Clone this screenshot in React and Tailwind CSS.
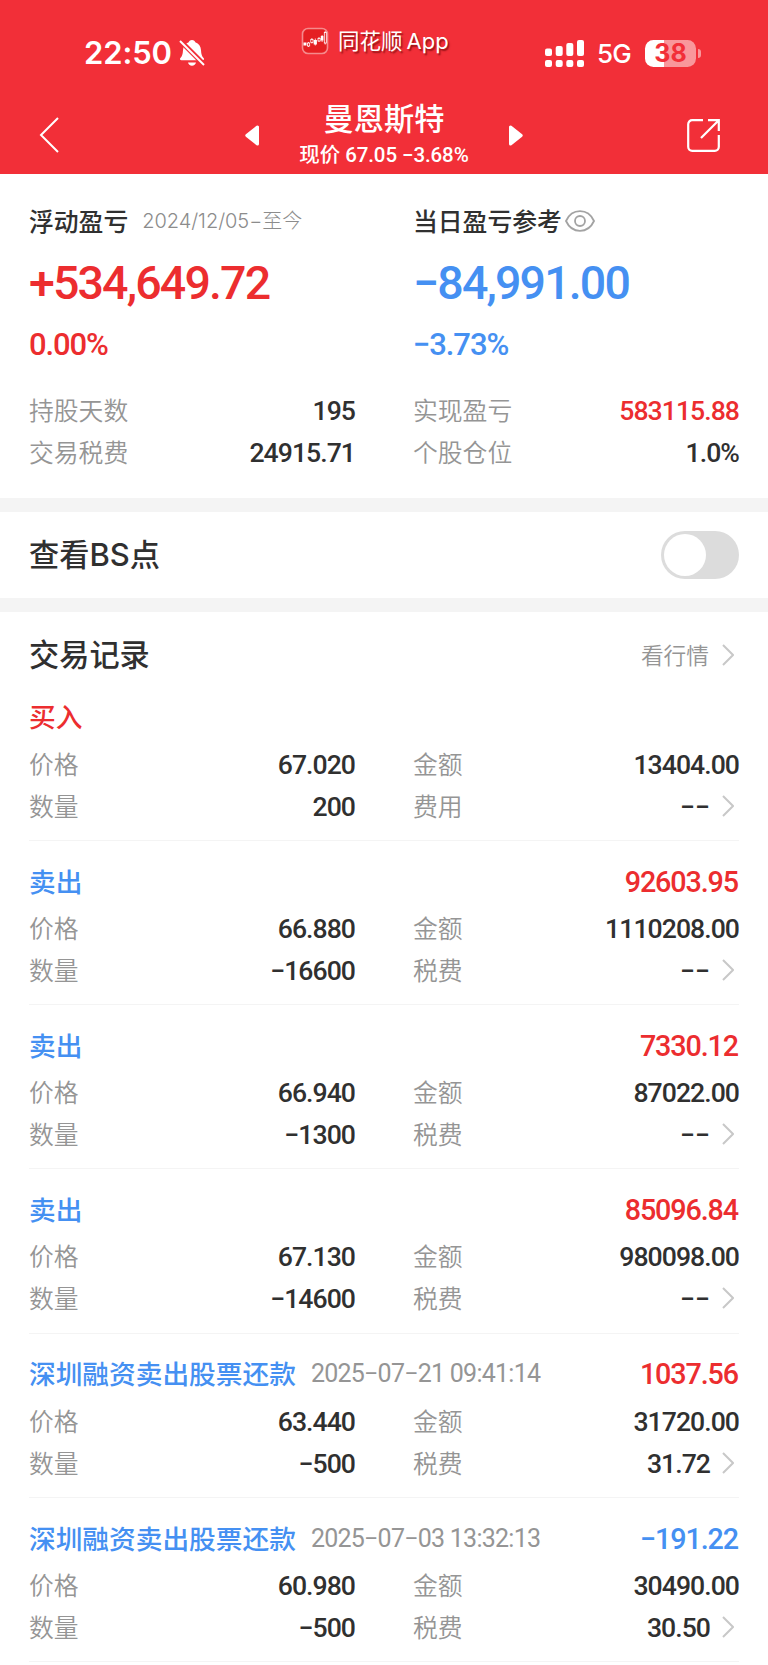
import React from 'react';

const RED = 'text-[#ec2d2f]';
const BLUE = 'text-[#4590f2]';
const NUM = "font-['Roboto','Noto_Sans_CJK_SC',sans-serif]";
const UI = "font-['Inter','Noto_Sans_CJK_SC',sans-serif]";

const records = [
  { side: '买入', color: RED, price: '67.020', amount: '13404.00', qty: '200', feeLabel: '费用', fee: '−−' },
  { side: '卖出', color: BLUE, profit: '92603.95', profitColor: RED, price: '66.880', amount: '1110208.00', qty: '−16600', feeLabel: '税费', fee: '−−' },
  { side: '卖出', color: BLUE, profit: '7330.12', profitColor: RED, price: '66.940', amount: '87022.00', qty: '−1300', feeLabel: '税费', fee: '−−' },
  { side: '卖出', color: BLUE, profit: '85096.84', profitColor: RED, price: '67.130', amount: '980098.00', qty: '−14600', feeLabel: '税费', fee: '−−' },
  { side: '深圳融资卖出股票还款', color: BLUE, time: '2025−07−21 09:41:14', profit: '1037.56', profitColor: RED, price: '63.440', amount: '31720.00', qty: '−500', feeLabel: '税费', fee: '31.72' },
  { side: '深圳融资卖出股票还款', color: BLUE, time: '2025−07−03 13:32:13', profit: '−191.22', profitColor: BLUE, price: '60.980', amount: '30490.00', qty: '−500', feeLabel: '税费', fee: '30.50' },
];

function Chevron() {
  return (
    <svg className="mr-[5px] h-6 w-3 shrink-0" viewBox="0 0 12 24" fill="none" stroke="#c8c8c8" strokeWidth="2">
      <path d="M1 2 L11 12 L1 22" />
    </svg>
  );
}

function Pair({ label, value, color = 'text-[#303030]', arrow = false }) {
  const tracking = value === '−−' ? 'tracking-[0px]' : 'tracking-[-0.95px]';
  return (
    <div className="flex h-[42px] items-center justify-between">
      <span className="pb-[2px] text-[24.8px] leading-[40px] font-[350] text-[#959595]">{label}</span>
      <span className="flex items-center">
        <span className={`${NUM} ${color} ${tracking} pt-[2px] text-[26.6px] leading-[40px] font-medium`}>{value}</span>
        {arrow && <span className="ml-[12px] flex"><Chevron /></span>}
      </span>
    </div>
  );
}

function StatusBar() {
  return (
    <div className={`${UI} flex h-[100px] items-start text-white`}>
      <div className="flex w-[301px] items-center pt-[34px] pl-[84px]">
        <span className="w-[88px] text-[31px] leading-[38px] font-semibold tracking-[-0.1px]">22:50</span>
        <svg className="ml-[7px] h-[28px] w-[26px]" viewBox="0 0 26 28">
          <path fill="#fff" d="M13 1c1.900 0 3 1.100 3.300 2.300 3.600 1.200 5.500 4.200 5.700 8 .2 4.200 1 6.200 2.600 7.700.9 1 .3 2.300-1 2.300H2.400c-1.300 0-1.900-1.300-1-2.300C3 17.500 3.800 15.500 4 11.300c.2-3.800 2.100-6.800 5.700-8C10 2.100 11.100 1 13 1zM9 23.500h8c-.4 2-2 3.200-4 3.200s-3.600-1.200-4-3.200z" />
          <path stroke="#f22f38" strokeWidth="5" d="M0 .5 26 26.500" />
          <path stroke="#fff" strokeWidth="1.900" d="M1 2 25 26" />
        </svg>
      </div>
      <div className="flex w-[244px] items-center pt-[26px]">
        <svg className="h-[28px] w-[28px]" viewBox="0 0 28 28">
          <rect x="1.500" y="1.500" width="25" height="25" rx="5.500" fill="#e51f22" stroke="#f58a8c" strokeWidth="1.600" />
          <g fill="#fff">
            <rect x="2.500" y="15.500" width="3" height="3" />
            <rect x="12.700" y="13" width="3.200" height="4.500" />
            <rect x="19.800" y="9" width="2.600" height="4.500" />
          </g>
          <g fill="none" stroke="#fff" strokeWidth=".8">
            <path d="M7.500 15v1M7.500 19v1M10.900 11v1.500M10.900 15.500v1M14.300 11.500v7M18 10v1.500M18 14v1M21.100 8v7M24.200 4v1.500M24.200 16v1.500" />
            <rect x="6.500" y="16" width="2.200" height="3" />
            <rect x="9.800" y="12.500" width="2.200" height="3" />
            <rect x="17" y="11.500" width="2.200" height="2.500" />
            <rect x="23.300" y="5.500" width="2" height="10.500" />
          </g>
        </svg>
        <span className="ml-[9px] text-[21.5px] leading-[30px] [text-shadow:1.5px_1.500px_1.500px_rgba(90,0,0,.6)]">同花顺</span>
        <span className="ml-[4px] text-[22px] leading-[30px] [text-shadow:1.5px_1.500px_1.500px_rgba(90,0,0,.6)]">App</span>
      </div>
      <div className="flex items-center pt-[37px]">
        <svg className="h-[28px] w-[39px]" viewBox="0 0 39 28" fill="#fff">
          <rect x="0" y="9.500" width="7" height="7.500" rx="2" />
          <rect x="10.700" y="7" width="7" height="10" rx="2" />
          <rect x="21.300" y="4" width="7" height="13" rx="2" />
          <rect x="32" y="1" width="7" height="16" rx="2" />
          <rect x="0" y="21" width="7" height="7" rx="2" />
          <rect x="10.700" y="21" width="7" height="7" rx="2" />
          <rect x="21.300" y="21" width="7" height="7" rx="2" />
          <rect x="32" y="21" width="7" height="7" rx="2" />
        </svg>
        <span className="ml-[13px] w-[35px] pt-[2px] text-[26px] leading-[30px] font-[450] tracking-[-0.8px]">5G</span>
        <div className="ml-[13px] flex h-[27px] w-[51px] items-center justify-center rounded-[8.500px] bg-linear-to-r from-white from-37% to-[#f9979b] to-37% text-[25px] leading-[27px] font-bold text-[#f22f38]">
          38
        </div>
        <div className="ml-[2px] h-[9px] w-[3px] rounded-r-full bg-[#f9979b]" />
      </div>
    </div>
  );
}

function NavBar() {
  return (
    <div className="flex h-[74.300px] items-start text-white">
      <svg className="mt-[17px] ml-[39px] h-[36px] w-[20px]" viewBox="0 0 20 36" fill="none" stroke="#fff" strokeWidth="2">
        <path d="M19 1 L2 18 L19 35" />
      </svg>
      <svg className="mt-[25px] ml-[186px] h-[21px] w-[14px]" viewBox="0 0 14 21">
        <path fill="#fff" stroke="#fff" strokeWidth="3" strokeLinejoin="round" d="M12.500 2v17L1.800 10.500z" />
      </svg>
      <div className="flex w-[250px] flex-col items-center">
        <div className="-mt-px text-[30.2px] leading-[36px] font-medium">曼恩斯特</div>
        <div className={`${NUM} mt-[7px] text-[20.500px] leading-[26px] font-medium tracking-[-0.1px]`}>现价 67.05 −3.68%</div>
      </div>
      <svg className="mt-[25px] h-[21px] w-[14px]" viewBox="0 0 14 21">
        <path fill="#fff" stroke="#fff" strokeWidth="3" strokeLinejoin="round" d="M1.500 2v17l10.700-8.500z" />
      </svg>
      <svg className="mt-[19px] ml-[164px] h-[33px] w-[33px]" viewBox="0 0 33 33" fill="none" stroke="#fff" strokeWidth="2.200">
        <path d="M16 1.200H5.200a4 4 0 0 0-4 4v22.600a4 4 0 0 0 4 4h22.600a4 4 0 0 0 4-4V16" />
        <path d="M21 1.200h10.800V12M31 2 14 19" />
      </svg>
    </div>
  );
}

function Headline({ color, amount, percent }) {
  return (
    <div className={`${NUM} ${color} font-medium`}>
      <div className="mt-[13px] h-[60px] text-[46.5px] leading-[60px] tracking-[-1.85px]">{amount}</div>
      <div className="mt-[12px] h-[40px] text-[31px] leading-[40px] tracking-[-1.1px]">{percent}</div>
    </div>
  );
}

function Summary() {
  return (
    <section className="grid grid-cols-2 pt-[28px] pb-[22px]">
      <div className="px-[29px]">
        <div className="flex h-[38px] items-center">
          <span className="pb-[3px] text-[24.8px] leading-[36px] font-medium">浮动盈亏</span>
          <span className={`${UI} ml-[14px] text-[20px] font-light tracking-[-0.05px] text-[#8c8c8c]`}>2024/12/05−至今</span>
        </div>
        <Headline color={RED} amount="+534,649.72" percent="0.00%" />
        <div className="mt-[24px]">
          <Pair label="持股天数" value="195" />
          <Pair label="交易税费" value="24915.71" />
        </div>
      </div>
      <div className="px-[29px]">
        <div className="flex h-[38px] items-center">
          <span className="pb-[3px] text-[24.8px] leading-[36px] font-medium">当日盈亏参考</span>
          <svg className="ml-[3px] h-[22px] w-[30px]" viewBox="0 0 30 22" fill="none" stroke="#a3a3a3" strokeWidth="1.800">
            <path d="M1 11C4 4.500 9 1.200 15 1.200S26 4.500 29 11c-3 6.500-8 9.800-14 9.800S4 17.500 1 11z" />
            <circle cx="15" cy="11" r="5" />
          </svg>
        </div>
        <Headline color={BLUE} amount="−84,991.00" percent="−3.73%" />
        <div className="mt-[24px]">
          <Pair label="实现盈亏" value="583115.88" color={RED} />
          <Pair label="个股仓位" value="1.0%" />
        </div>
      </div>
    </section>
  );
}

function Record({ r }) {
  return (
    <div className="mx-[29px] h-[164.270px] border-b border-[#f4f4f4] pt-[16.6px]">
      <div className="flex h-[48px] items-center">
        <span className={`${r.color} pb-[2px] text-[26.700px] leading-[46px] font-[450]`}>{r.side}</span>
        {r.time && <span className={`${NUM} ml-[15px] text-[25px] leading-[48px] tracking-[-0.750px] text-[#959595]`}>{r.time}</span>}
        {r.profit && <span className={`${NUM} ${r.profitColor} ml-auto pr-[1px] text-[28.7px] leading-[48px] font-medium tracking-[-1.1px]`}>{r.profit}</span>}
      </div>
      <div className="mt-[1.400px] grid grid-cols-2 gap-x-[58px]">
        <Pair label="价格" value={r.price} />
        <Pair label="金额" value={r.amount} />
        <Pair label="数量" value={r.qty} />
        <Pair label={r.feeLabel} value={r.fee} arrow />
      </div>
    </div>
  );
}

export default function App() {
  return (
    <div className="h-[1665px] w-[768px] overflow-hidden bg-white font-['Noto_Sans_CJK_SC',sans-serif] text-[#303030]">
      <header className="bg-[#f22f38]">
        <StatusBar />
        <NavBar />
      </header>
      <div className="h-[323.700px]">
        <Summary />
      </div>
      <div className="h-[14px] bg-[#f4f4f4]" />
      <section className="flex h-[86px] items-center justify-between px-[29px]">
        <span className="pb-[1px] text-[30.2px] font-medium">
          查看<span className={`${UI} text-[31px] font-[450]`}>BS</span>点
        </span>
        <button className="flex h-[48px] w-[78px] items-center rounded-full bg-[#dcdcdc] pl-[3px]">
          <span className="h-[42px] w-[42px] rounded-full bg-white" />
        </button>
      </section>
      <div className="h-[14px] bg-[#f4f4f4]" />
      <section>
        <div className="flex h-[64.7px] items-center justify-between px-[29px] pt-[22px]">
          <span className="pb-[4.5px] text-[30.2px] leading-[40px] font-medium">交易记录</span>
          <span className="flex items-center">
            <span className="mr-[13px] pb-[1px] text-[22.700px] leading-[36px] font-[350] text-[#959595]">看行情</span>
            <Chevron />
          </span>
        </div>
        {records.map((r, i) => (
          <Record key={i} r={r} />
        ))}
      </section>
    </div>
  );
}
